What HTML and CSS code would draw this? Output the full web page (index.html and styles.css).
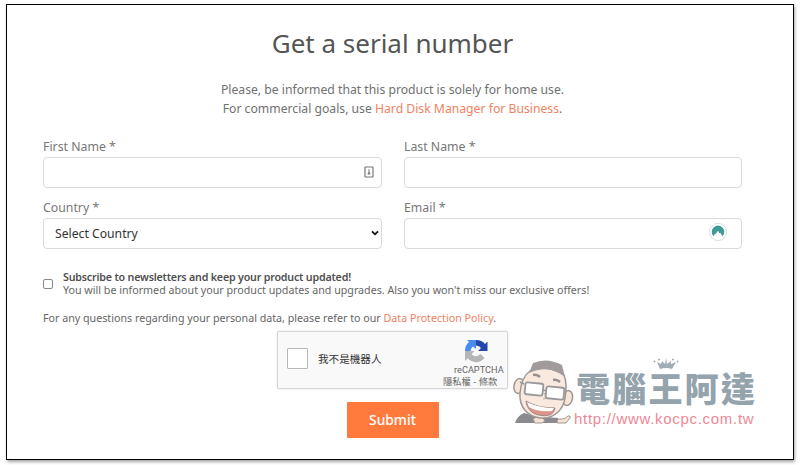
FILE: index.html
```html
<!DOCTYPE html>
<html lang="en">
<head>
    <meta charset="UTF-8">
    <meta name="viewport" content="width=device-width, initial-scale=1.0">
    <title>Get a serial number</title>
    <link rel="stylesheet" href="styles.css">
</head>
<body>
    <div class="container">
        <h1>Get a serial number</h1>
        <p class="intro">
            Please, be informed that this product is solely for home use.<br>
            For commercial goals, use <a href="#">Hard Disk Manager for Business</a>.
        </p>

        <form>
            <!-- Fields -->
            <div class="fields">
                <div class="form-group">
                    <label for="firstName">First Name *</label>
                    <div class="input-box">
                        <input type="text" id="firstName">
                        <svg class="autofill-icon" viewBox="0 0 10 12">
                            <rect x="1" y="1" width="8" height="10" rx="0.5" fill="#fff" stroke="#777" stroke-width="1.2"/>
                            <circle cx="5" cy="4" r="0.8" fill="#777"/>
                            <path d="M4.200 5.300h1.500v2h.7v1.200H3.600V7.300h.6z" fill="#777"/>
                        </svg>
                    </div>
                </div>
                <div class="form-group">
                    <label for="lastName">Last Name *</label>
                    <div class="input-box">
                        <input type="text" id="lastName">
                    </div>
                </div>
                <div class="form-group">
                    <label for="country">Country *</label>
                    <div class="input-box">
                        <select id="country">
                            <option>Select Country</option>
                        </select>
                        <svg class="arrow-icon" viewBox="0 0 8 6">
                            <path d="M1 1.300l3 3 3-3" fill="none" stroke="#111" stroke-width="1.8"/>
                        </svg>
                    </div>
                </div>
                <div class="form-group">
                    <label for="email">Email *</label>
                    <div class="input-box">
                        <input type="text" id="email">
                        <svg class="mask-icon" viewBox="0 0 20 20">
                            <circle cx="10" cy="10" r="8.600" fill="#fff" stroke="#d5e3e3" stroke-width="1"/>
                            <path d="M5.400 14.200A6.300 6.300 0 1 1 14.600 14.200L12.300 10.700 11.500 11.300 10 8.800 7.700 11.900 7.200 11.400z" fill="#3e9a97"/>
                        </svg>
                    </div>
                </div>
            </div>

            <!-- Newsletter -->
            <div class="subscribe">
                <input type="checkbox" id="newsletter">
                <label for="newsletter">
                    <strong>Subscribe to newsletters and keep your product updated!</strong>
                    <span>You will be informed about your product updates and upgrades. Also you won't miss our exclusive offers!</span>
                </label>
            </div>
            <p class="policy">For any questions regarding your personal data, please refer to our <a href="#">Data Protection Policy</a>.</p>

            <!-- reCAPTCHA -->
            <div class="captcha">
                <span class="captcha-check"></span>
                <span class="captcha-text">我不是機器人</span>
                <div class="captcha-brand">
                    <svg class="captcha-logo" viewBox="0 0 24 24">
                        <path d="M1 12C1 8 2.500 5 5 3L3 1h9v9L9 7.500Q6.500 9 6.500 12z" fill="#4a8df0"/>
                        <path d="M12 1c4 0 7 1.500 9 4l2.500-2.500V12h-9.500l3-3Q15.500 6.500 12 6.500z" fill="#2248ad"/>
                        <path d="M1 12h9.500l-3 3q3.500 4.500 9 0l4 4C15 25 8 24 3.800 19.300L1 22z" fill="#b4b5b8"/>
                    </svg>
                    <span class="captcha-name">reCAPTCHA</span>
                    <span class="captcha-links">隱私權 - 條款</span>
                </div>
            </div>

            <button type="button">Submit</button>
        </form>
    </div>

    <!-- Watermark -->
    <div class="watermark">
        <svg class="mascot" viewBox="0 0 64 66">
            <path d="M3 65q2-7 9-10l10 3 24 2 3 5z" fill="#8b8a8e"/>
            <path d="M21 61l5-3 4 1 3 4-3 2h-7z" fill="#f6e1d2" stroke="#a09a98"/>
            <path d="M45 65q0-5 5-4 3 0 6-3 3-1 2 2l-4 5z" fill="#f6e1d2" stroke="#a09a98"/>
            <ellipse cx="7" cy="28" rx="5" ry="7.500" fill="#f8e5d8" stroke="#9d9795" stroke-width="1.500" transform="rotate(12 7 28)"/>
            <ellipse cx="55.500" cy="40" rx="5" ry="7.500" fill="#f8e5d8" stroke="#9d9795" stroke-width="1.500" transform="rotate(12 55.500 40)"/>
            <path d="M18 13C12 17 9 25 8 35c-1 14 7 23 20 25 13 1 23-7 25-20 2-11 1-18-1-23C42 10 28 8 18 13z" fill="#fae9df" stroke="#9d9795" stroke-width="1.500"/>
            <path d="M17 15l4-10Q35-1 50 7l3 12C42 10 29 9 17 15z" fill="#a29b9b"/>
            <path d="M21 17q4-1 7 2M41 22q4-1 7 2" fill="none" stroke="#99908e" stroke-width="2.500"/>
            <path d="M31 32l4 1M12 26l-4-2M51 33l3 1" stroke="#99999d" stroke-width="1.800"/>
            <rect x="13" y="25" width="18" height="12" rx="2" fill="#fff" stroke="#99999d" stroke-width="1.800" transform="rotate(6 22 31)"/>
            <rect x="34" y="29" width="18" height="12" rx="2" fill="#fff" stroke="#99999d" stroke-width="1.800" transform="rotate(6 43 35)"/>
            <path d="M32 35q5 6-1 6" fill="none" stroke="#b5a29b"/>
            <path d="M14 43c8 5 18 7 29 7-1 7-8 9-16 7-7-1-12-6-13-14z" fill="#dd948b" stroke="#9c8583"/>
            <path d="M15 44c8 4 18 6 27 6l-2 3c-8 1-17 0-23-4z" fill="#fff"/>
        </svg>
        <div class="watermark-text">
            <svg class="crown" viewBox="0 0 26 12">
                <path d="M4 4l4 2 1-3 3 3 1-6 1 6 4-3 0 3 5-2-4 7q-6-2-12 0z" fill="#a3adb5"/>
                <circle cx="1.500" cy="3.500" r="1" fill="#a3adb5"/>
                <circle cx="6" cy="1.500" r="1" fill="#a3adb5"/>
                <circle cx="20" cy="1.500" r="1" fill="#a3adb5"/>
                <circle cx="24.500" cy="3.500" r="1" fill="#a3adb5"/>
            </svg>
            <div class="watermark-name">電腦王阿達</div>
            <div class="watermark-url">http://www.kocpc.com.tw</div>
        </div>
    </div>
</body>
</html>
```
FILE: styles.css
```css
* {
    box-sizing: border-box;
}

body {
    font-family: 'Noto Sans', 'Noto Sans CJK TC', sans-serif;
    margin: 0;
    padding: 4px 6px 5px;
    height: 465px;
    background: #fff;
    color: #666;
    font-size: 12px;
    overflow: hidden;
}

.container {
    width: 788px;
    height: 456px;
    padding: 20px 51px 0 36px;
    border: 1px solid #000;
    box-shadow: 1px 2px 3px rgba(0, 0, 0, 0.35);
}

h1 {
    margin: 0 0 19px;
    text-align: center;
    color: #555;
    font-size: 26px;
    font-weight: 400;
    line-height: 36px;
}

a {
    color: #f0825f;
    text-decoration: none;
}

.intro {
    margin: 0 0 20px;
    text-align: center;
    line-height: 19px;
    font-size: 12.2px;
    color: #707070;
}

.fields {
    display: grid;
    grid-template-columns: 339px 338px;
    column-gap: 22px;
    row-gap: 11px;
}

.form-group label {
    display: block;
    height: 19px;
    line-height: 18px;
    font-size: 12.3px;
    color: #777;
}

.input-box {
    position: relative;
    height: 31px;
}

.input-box input,
.input-box select {
    display: block;
    width: 100%;
    height: 31px;
    padding: 0 11px 1px;
    border: 1px solid #dadada;
    border-radius: 4px;
    background: #fff;
    color: #333;
    font-family: inherit;
    font-size: 12.2px;
    appearance: none;
}

.autofill-icon {
    position: absolute;
    top: 9px;
    right: 8px;
    width: 10px;
    height: 12px;
}

.arrow-icon {
    position: absolute;
    top: 12px;
    right: 3px;
    width: 8px;
    height: 6px;
}

.mask-icon {
    position: absolute;
    top: 4px;
    right: 14px;
    width: 20px;
    height: 20px;
}

.subscribe {
    display: flex;
    align-items: center;
    gap: 10px;
    margin-top: 22px;
    font-size: 10.7px;
    line-height: 13px;
}

.subscribe input {
    appearance: none;
    width: 10px;
    height: 10px;
    margin: 0 0 1px;
    border: 1px solid #888;
    border-radius: 2px;
}

.subscribe strong,
.subscribe span {
    display: block;
}

.subscribe strong {
    color: #505050;
    font-size: 10.7px;
    font-weight: 600;
    letter-spacing: -0.2px;
}

.policy {
    margin: 13px 0 5px;
    font-size: 10.7px;
    line-height: 16px;
}

.captcha {
    display: flex;
    align-items: center;
    width: 231px;
    height: 58px;
    margin: 0 auto;
    padding-left: 9px;
    border: 1px solid #d6d6d6;
    border-radius: 2px;
    background: #f9f9f9;
    box-shadow: 0 0 3px rgba(0, 0, 0, 0.1);
}

.captcha-check {
    width: 21px;
    height: 21px;
    margin-top: -4px;
    border: 1px solid #b8b8b8;
    border-radius: 1px;
    background: #fff;
}

.captcha-text {
    margin: -4px 0 0 10px;
    color: #333;
    font-size: 10.6px;
}

.captcha-brand {
    display: flex;
    flex-direction: column;
    width: 64px;
    margin-left: auto;
    padding-top: 7px;
    color: #666;
}

.captcha-logo {
    width: 24px;
    height: 24px;
    margin-left: 21px;
}

.captcha-name {
    margin-left: 11px;
    font-family: Roboto, sans-serif;
    font-size: 9.2px;
    line-height: 13px;
}

.captcha-links {
    font-size: 9.3px;
    line-height: 12px;
}

button {
    display: block;
    width: 92px;
    height: 36px;
    margin: 13px auto 0;
    padding: 0 0 1px;
    border: none;
    background: #ff7a3c;
    color: #fff;
    font-family: inherit;
    font-size: 13.8px;
    font-weight: 500;
}

.watermark {
    position: absolute;
    left: 512px;
    top: 358px;
    display: flex;
}

.mascot {
    width: 64px;
    height: 66px;
}

.watermark-text {
    width: 184px;
}

.crown {
    display: block;
    width: 26px;
    height: 12px;
    margin-left: 77px;
}

.watermark-name {
    font-family: 'Noto Sans CJK TC', sans-serif;
    font-size: 34px;
    font-weight: 900;
    line-height: 36px;
    letter-spacing: 2.2px;
    white-space: nowrap;
    color: #95a3ad;
}

.watermark-url {
    margin: 4px 0 0 -2px;
    font-family: 'Liberation Sans', sans-serif;
    font-size: 15px;
    line-height: 17px;
    letter-spacing: 0.7px;
    white-space: nowrap;
    color: #ee8796;
}
```
